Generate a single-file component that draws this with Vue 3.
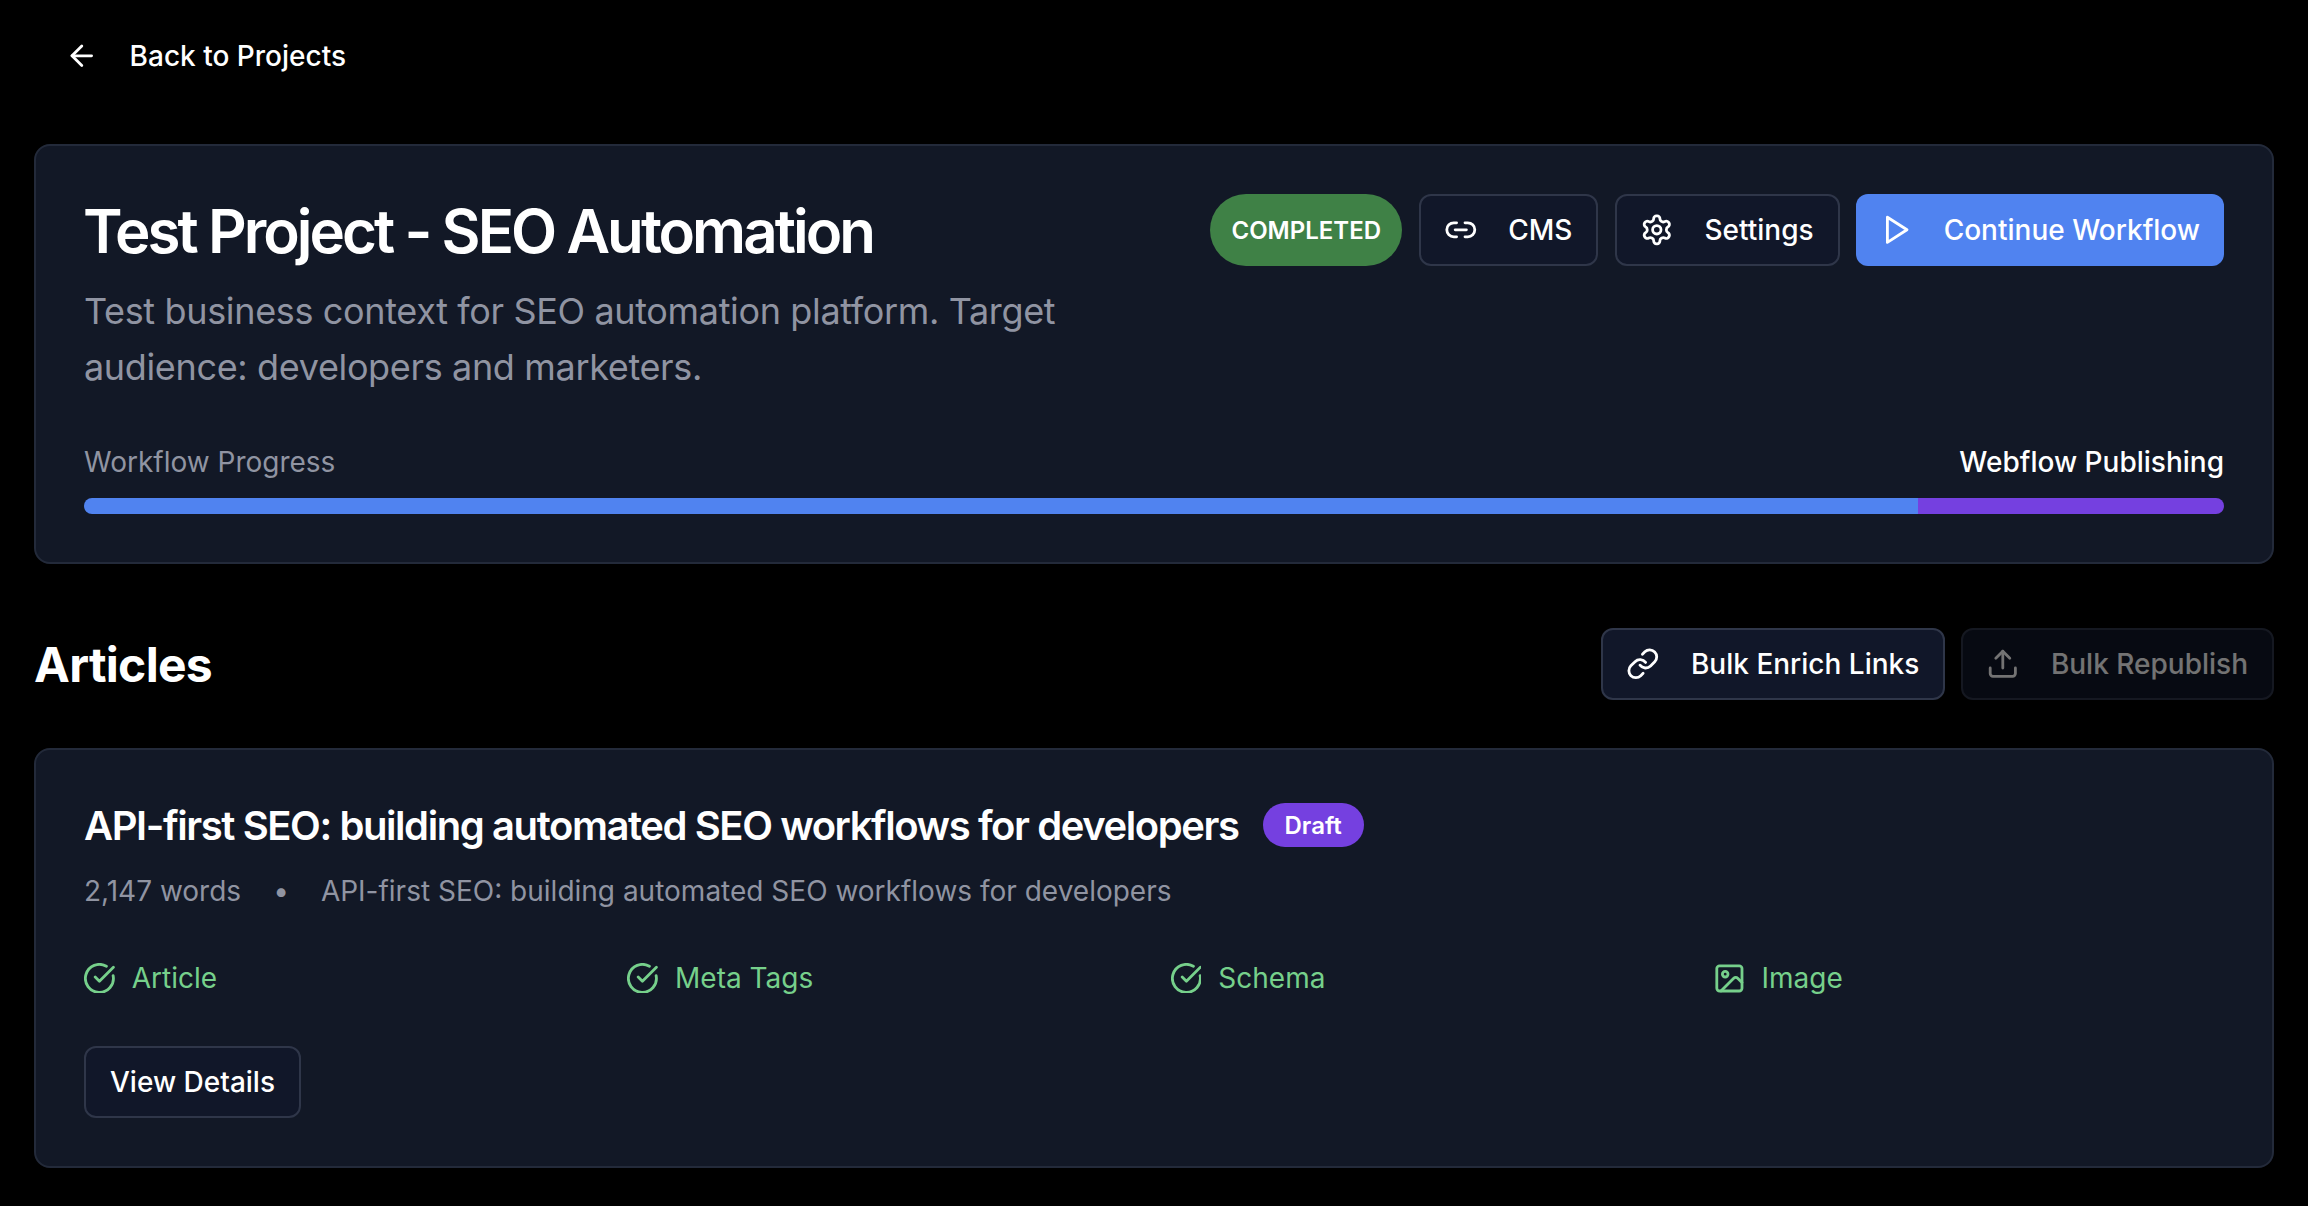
<script setup>
const statuses = [
  { label: 'Article', icon: 'check' },
  { label: 'Meta Tags', icon: 'check' },
  { label: 'Schema', icon: 'check' },
  { label: 'Image', icon: 'image' }
]
</script>

<template>
  <div class="page">
    <a class="back">
      <svg class="ico" viewBox="0 0 24 24"><path d="m12 19-7-7 7-7" /><path d="M19 12H5" /></svg>
      <span>Back to Projects</span>
    </a>

    <section class="card project">
      <div class="head">
        <div class="intro">
          <h1>Test Project - SEO Automation</h1>
          <p>Test business context for SEO automation platform. Target audience: developers and marketers.</p>
        </div>
        <div class="actions">
          <span class="pill">COMPLETED</span>
          <button class="btn">
            <svg class="ico" viewBox="0 0 24 24"><path d="M9 17H7A5 5 0 0 1 7 7h2" /><path d="M15 7h2a5 5 0 1 1 0 10h-2" /><path d="M8 12h8" /></svg>
            CMS
          </button>
          <button class="btn">
            <svg class="ico" viewBox="0 0 24 24"><path d="M12.220 2h-.44a2 2 0 0 0-2 2v.18a2 2 0 0 1-1 1.730l-.43.25a2 2 0 0 1-2 0l-.15-.08a2 2 0 0 0-2.730.73l-.22.38a2 2 0 0 0 .73 2.730l.15.1a2 2 0 0 1 1 1.720v.51a2 2 0 0 1-1 1.740l-.15.09a2 2 0 0 0-.73 2.730l.22.38a2 2 0 0 0 2.730.73l.15-.08a2 2 0 0 1 2 0l.43.25a2 2 0 0 1 1 1.730V20a2 2 0 0 0 2 2h.44a2 2 0 0 0 2-2v-.18a2 2 0 0 1 1-1.730l.43-.25a2 2 0 0 1 2 0l.15.08a2 2 0 0 0 2.730-.73l.22-.39a2 2 0 0 0-.73-2.730l-.15-.08a2 2 0 0 1-1-1.740v-.5a2 2 0 0 1 1-1.740l.15-.09a2 2 0 0 0 .73-2.730l-.22-.38a2 2 0 0 0-2.730-.73l-.15.08a2 2 0 0 1-2 0l-.43-.25a2 2 0 0 1-1-1.730V4a2 2 0 0 0-2-2z" /><circle cx="12" cy="12" r="3" /></svg>
            Settings
          </button>
          <button class="btn primary">
            <svg class="ico" viewBox="0 0 24 24"><polygon points="6 3 20 12 6 21 6 3" /></svg>
            Continue Workflow
          </button>
        </div>
      </div>
      <div class="progress-labels">
        <span>Workflow Progress</span>
        <strong>Webflow Publishing</strong>
      </div>
      <div class="bar">
        <div class="bar-done"></div>
        <div class="bar-current"></div>
      </div>
    </section>

    <div class="section-head">
      <h2>Articles</h2>
      <div class="section-actions">
        <button class="btn">
          <svg class="ico" viewBox="0 0 24 24"><path d="M10 13a5 5 0 0 0 7.540.54l3-3a5 5 0 0 0-7.070-7.070l-1.720 1.710" /><path d="M14 11a5 5 0 0 0-7.540-.54l-3 3a5 5 0 0 0 7.070 7.070l1.710-1.710" /></svg>
          Bulk Enrich Links
        </button>
        <button class="btn disabled">
          <svg class="ico" viewBox="0 0 24 24"><path d="M21 15v4a2 2 0 0 1-2 2H5a2 2 0 0 1-2-2v-4" /><path d="m17 8-5-5-5 5" /><path d="M12 3v12" /></svg>
          Bulk Republish
        </button>
      </div>
    </div>

    <section class="card article">
      <div class="title-row">
        <h3>API-first SEO: building automated SEO workflows for developers</h3>
        <span class="draft">Draft</span>
      </div>
      <div class="meta">
        <span>2,147 words</span>
        <span class="dot">•</span>
        <span>API-first SEO: building automated SEO workflows for developers</span>
      </div>
      <div class="statuses">
        <div v-for="s in statuses" :key="s.label" class="status">
          <svg v-if="s.icon === 'check'" class="ico status-ico" viewBox="1 1 22 22"><path d="M21.800 10A10 10 0 1 1 17 3.340" /><path d="m9 11 3 3L22 4" /></svg>
          <svg v-else class="ico status-ico" viewBox="1 1 22 22"><rect x="3" y="3" width="18" height="18" rx="2" /><circle cx="9" cy="9" r="2" /><path d="m21 15-3.090-3.090a2 2 0 0 0-2.820 0L6 21" /></svg>
          <span>{{ s.label }}</span>
        </div>
      </div>
      <button class="btn details">View Details</button>
    </section>
  </div>
</template>

<style>
html, body { margin: 0; background: #000; }
</style>

<style scoped>
.page {
  box-sizing: border-box;
  width: 2308px;
  height: 1206px;
  padding: 0 34px;
  background: #000;
  color: #fff;
  font-family: Inter, "Liberation Sans", sans-serif;
  overflow: hidden;
}
.ico {
  width: 33.6px;
  height: 33.6px;
  flex: none;
  fill: none;
  stroke: currentColor;
  stroke-width: 2;
  stroke-linecap: round;
  stroke-linejoin: round;
}
.back {
  display: inline-flex;
  align-items: center;
  gap: 31px;
  height: 112px;
  padding-left: 31px;
  font-size: 28px;
  font-weight: 500;
  color: #fff;
}
.card {
  box-sizing: border-box;
  background: #121826;
  border: 2px solid #232a3a;
  border-radius: 16px;
  padding: 48px;
}
.project { margin-top: 32px; }
.head { display: flex; justify-content: space-between; align-items: flex-start; }
.intro { width: 1040px; }
h1 {
  margin: 0 0 0 -1px;
  font-size: 60px;
  line-height: 74px;
  font-weight: 600;
  letter-spacing: -2.95px;
}
.intro p {
  margin: 15px 0 0;
  font-size: 36px;
  line-height: 56px;
  letter-spacing: -0.35px;
  color: #9094a2;
}
.actions { display: flex; align-items: center; gap: 16.5px; }
.pill {
  display: flex;
  align-items: center;
  box-sizing: border-box;
  height: 72px;
  padding: 0 21px;
  border-radius: 36px;
  background: #3f8146;
  font-size: 24px;
  font-weight: 600;
}
.btn {
  display: inline-flex;
  align-items: center;
  gap: 31px;
  box-sizing: border-box;
  height: 72px;
  padding: 0 24px 0 23px;
  background: #111729;
  border: 2px solid #2f3649;
  border-radius: 12px;
  color: #fff;
  font-family: inherit;
  font-size: 28px;
  font-weight: 500;
}
.primary { background: #5083f0; border: none; }
.progress-labels {
  display: flex;
  justify-content: space-between;
  align-items: center;
  margin-top: 47px;
  height: 40px;
  font-size: 28px;
  color: #9094a2;
}
.progress-labels strong { color: #fff; font-weight: 500; }
.bar {
  display: flex;
  height: 16px;
  margin-top: 16px;
  border-radius: 8px;
  overflow: hidden;
}
.bar-done { flex: 6; background: #5083f0; }
.bar-current { flex: 1; background: #7540e0; }
.section-head {
  display: flex;
  justify-content: space-between;
  align-items: center;
  margin-top: 64px;
  height: 72px;
}
h2 { margin: 0; font-size: 48px; font-weight: 700; letter-spacing: -0.7px; }
.section-actions { display: flex; gap: 16px; }
.disabled { opacity: 0.45; }
.article { margin-top: 48px; }
.title-row { display: flex; align-items: center; gap: 24px; height: 44px; margin-top: 5px; }
h3 { margin: 0; font-size: 40px; font-weight: 600; letter-spacing: -1.42px; }
.draft {
  display: flex;
  align-items: center;
  height: 44px;
  padding: 0 22px;
  border-radius: 22px;
  background: #7540e0;
  font-size: 24px;
  font-weight: 600;
}
.meta {
  display: flex;
  gap: 32px;
  margin-top: 26px;
  font-size: 28px;
  line-height: 36px;
  color: #9094a2;
}
.statuses {
  display: grid;
  grid-template-columns: repeat(4, 1fr);
  column-gap: 33px;
  margin-top: 51px;
}
.status {
  display: flex;
  align-items: center;
  gap: 17px;
  height: 36px;
  font-size: 28px;
  line-height: 36px;
  color: #76d08b;
}
.status-ico { width: 30.8px; height: 30.8px; }
.btn.details { margin-top: 50px; padding: 0 24px; }
</style>
